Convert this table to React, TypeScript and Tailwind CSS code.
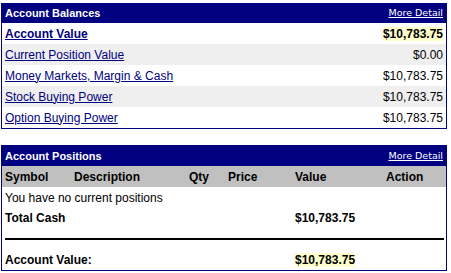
const font = { fontFamily: '"Liberation Sans", Arial, sans-serif' };

const balances = [
  { label: "Account Value", value: "$10,783.75", main: true },
  { label: "Current Position Value", value: "$0.00" },
  { label: "Money Markets, Margin & Cash", value: "$10,783.75" },
  { label: "Stock Buying Power", value: "$10,783.75" },
  { label: "Option Buying Power", value: "$10,783.75" },
];

const cols = ["Symbol", "Description", "Qty", "Price", "Value", "Action"];
const grid = "grid grid-cols-[69px_115px_39px_67px_91px_1fr]";

function Header({ title }: { title: string }) {
  return (
    <div className="flex items-center justify-between h-[20px] bg-[#000080] px-[3px] text-white">
      <span className="text-[11px] font-bold">{title}</span>
      <a
        href="#"
        className="text-[9.5px] underline text-white"
        style={{ fontFamily: '"DejaVu Sans", Verdana, sans-serif' }}
      >
        More Detail
      </a>
    </div>
  );
}

export default function App() {
  return (
    <div className="bg-white w-[451px] h-[273px] pt-[3px] pl-[1px] text-black" style={font}>
      <div className="w-[446px] border border-[#000080] border-t-0">
        <Header title="Account Balances" />
        {balances.map((b, i) => (
          <div
            key={b.label}
            className={`flex items-center justify-between h-[21px] px-[3px] text-[12px] ${
              i % 2 === 1 ? "bg-[#efefef]" : "bg-white"
            }`}
          >
            <a href="#" className={`text-[#000080] underline ${b.main ? "font-bold" : ""}`}>
              {b.label}
            </a>
            {b.main ? (
              <span className="font-bold bg-[#ffffcc] leading-[14px]">{b.value}</span>
            ) : (
              <span>{b.value}</span>
            )}
          </div>
        ))}
      </div>

      <div className="mt-[16px] w-[446px] border border-[#000080]">
        <Header title="Account Positions" />
        <div className={`${grid} items-center h-[21px] bg-[#c0c0c0] px-[3px] text-[12px] font-bold`}>
          {cols.map((c) => (
            <span key={c}>{c}</span>
          ))}
        </div>
        <div className="flex items-center h-[21px] px-[3px] text-[12px]">You have no current positions</div>
        <div className={`${grid} items-center h-[20px] px-[3px] text-[12px] font-bold`}>
          <span className="col-span-4">Total Cash</span>
          <span>$10,783.75</span>
        </div>
        <div className="h-[2px] bg-black mt-[10px] mb-[10px] ml-[3px] mr-[2px]" />
        <div className={`${grid} items-center h-[20px] px-[3px] text-[12px] font-bold`}>
          <span className="col-span-4">Account Value:</span>
          <span>
            <span className="bg-[#ffffcc] leading-[14px]">$10,783.75</span>
          </span>
        </div>
      </div>
    </div>
  );
}
